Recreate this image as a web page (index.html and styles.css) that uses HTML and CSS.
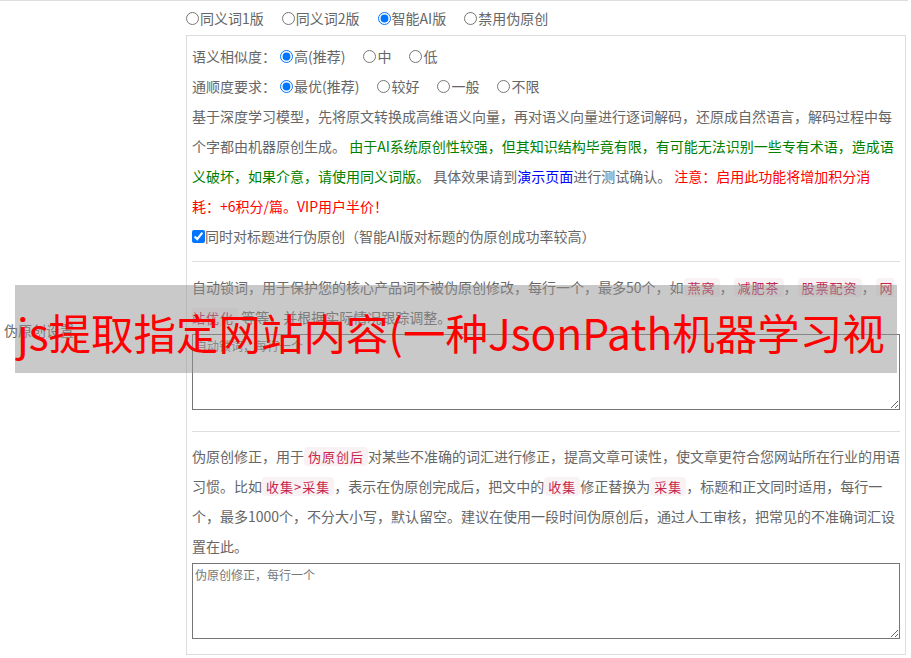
FILE: index.html
```html
<!DOCTYPE html>
<html lang="zh-CN">
<head>
<meta charset="utf-8">
<title>伪原创设置</title>
<link rel="stylesheet" href="styles.css">
</head>
<body>
<div class="setting">
  <div class="setting-label">伪原创设置</div>
  <div class="setting-field">
    <div class="mode-row">
      <label class="opt"><input type="radio" name="mode">同义词1版</label>
      <label class="opt"><input type="radio" name="mode">同义词2版</label>
      <label class="opt"><input type="radio" name="mode" checked>智能AI版</label>
      <label class="opt"><input type="radio" name="mode">禁用伪原创</label>
    </div>
    <div class="ai-box">
      <div class="opt-row">
        <span class="opt-title">语义相似度：</span>
        <label class="opt"><input type="radio" name="sim" checked>高(推荐)</label>
        <label class="opt"><input type="radio" name="sim">中</label>
        <label class="opt"><input type="radio" name="sim">低</label>
      </div>
      <div class="opt-row">
        <span class="opt-title">通顺度要求：</span>
        <label class="opt"><input type="radio" name="flu" checked>最优(推荐)</label>
        <label class="opt"><input type="radio" name="flu">较好</label>
        <label class="opt"><input type="radio" name="flu">一般</label>
        <label class="opt"><input type="radio" name="flu">不限</label>
      </div>
      <p class="desc">基于深度学习模型，先将原文转换成高维语义向量，再对语义向量进行逐词解码，还原成自然语言，解码过程中每个字都由机器原创生成。 <span class="green">由于AI系统原创性较强，但其知识结构毕竟有限，有可能无法识别一些专有术语，造成语义破坏，如果介意，请使用同义词版。</span> 具体效果请到<a class="link" href="#">演示页面</a>进行测试确认。 <span class="red">注意：启用此功能将增加积分消<br>耗：+6积分/篇。VIP用户半价！</span></p>
      <label class="check"><input type="checkbox" checked>同时对标题进行伪原创（智能AI版对标题的伪原创成功率较高）</label>
      <div class="section">
        <p class="desc">自动锁词，用于保护您的核心产品词不被伪原创修改，每行一个，最多50个，如<code class="tag">燕窝</code>，<code class="tag">减肥茶</code>，<code class="tag">股票配资</code>，<code class="tag">网站优化</code> 等等，并根据实际情况跟踪调整。</p>
        <textarea class="words" placeholder="自动锁词，每行一个"></textarea>
      </div>
      <div class="section section-last">
        <p class="desc">伪原创修正，用于<code class="tag">伪原创后</code>对某些不准确的词汇进行修正，提高文章可读性，使文章更符合您网站所在行业的用语习惯。比如<code class="tag">收集&gt;采集</code>，表示在伪原创完成后，把文中的<code class="tag">收集</code>修正替换为<code class="tag">采集</code>，标题和正文同时适用，每行一个，最多1000个，不分大小写，默认留空。建议在使用一段时间伪原创后，通过人工审核，把常见的不准确词汇设置在此。</p>
        <textarea class="words" placeholder="伪原创修正，每行一个"></textarea>
      </div>
    </div>
  </div>
</div>
<div class="banner">js提取指定网站内容(一种JsonPath机器学习视</div>
</body>
</html>
```
FILE: styles.css
```css
body {
  margin: 0;
  background: #fff;
  font-family: "Noto Sans CJK SC", "Noto Sans", sans-serif;
  font-size: 14px;
  color: #666;
}

.setting {
  display: grid;
  grid-template-columns: 186px 722px;
  width: 908px;
  border-top: 1px solid #ddd;
}

.setting-label {
  align-self: center;
  padding-left: 4px;
  line-height: 20px;
}

.setting-field {
  padding-bottom: 3px;
}

.mode-row {
  display: flex;
  align-items: center;
  height: 34px;
}

.opt {
  display: inline-flex;
  align-items: center;
  margin-right: 18px;
}

.opt input {
  margin: 0 1px 0 0;
  width: 13px;
  height: 13px;
}

.ai-box {
  width: 720px;
  box-sizing: border-box;
  border: 1px solid #ddd;
  padding: 5px 5px 15px 5px;
}

.opt-row {
  display: flex;
  align-items: center;
  height: 30px;
}

.opt-title {
  margin-right: 4px;
}

.desc {
  margin: 0;
  line-height: 30px;
}

.green {
  color: #008000;
}

.red {
  color: #ff0000;
}

.link {
  color: #0000ff;
  text-decoration: none;
}

.check {
  display: flex;
  align-items: center;
  height: 30px;
}

.check input {
  margin: 0;
  width: 13px;
  height: 13px;
}

.section {
  margin-top: 10px;
  border-top: 1px solid #ddd;
  padding-top: 10px;
}

.section-last {
  margin-top: 21px;
  padding-top: 9px;
}

.tag {
  font-family: "Noto Sans CJK SC", sans-serif;
  font-size: 13px;
  letter-spacing: 1px;
  line-height: 1;
  padding: 0 4px;
  background: #f9f2f4;
  color: #c7254e;
  border-radius: 4px;
}

.words {
  display: block;
  box-sizing: border-box;
  width: 100%;
  height: 76px;
  margin: 2px 0 0 0;
  padding: 2px;
  border: 1px solid #767676;
  font-family: "Noto Sans CJK SC", sans-serif;
  font-size: 12px;
  line-height: 18px;
  color: #333;
}

.words::placeholder {
  color: #777;
}

.banner {
  position: absolute;
  left: 15px;
  top: 285px;
  width: 880px;
  height: 88px;
  padding-left: 2px;
  overflow: hidden;
  white-space: nowrap;
  background: rgba(147, 147, 147, 0.5);
  color: #ff0000;
  font-size: 42.5px;
  line-height: 94px;
}
```
